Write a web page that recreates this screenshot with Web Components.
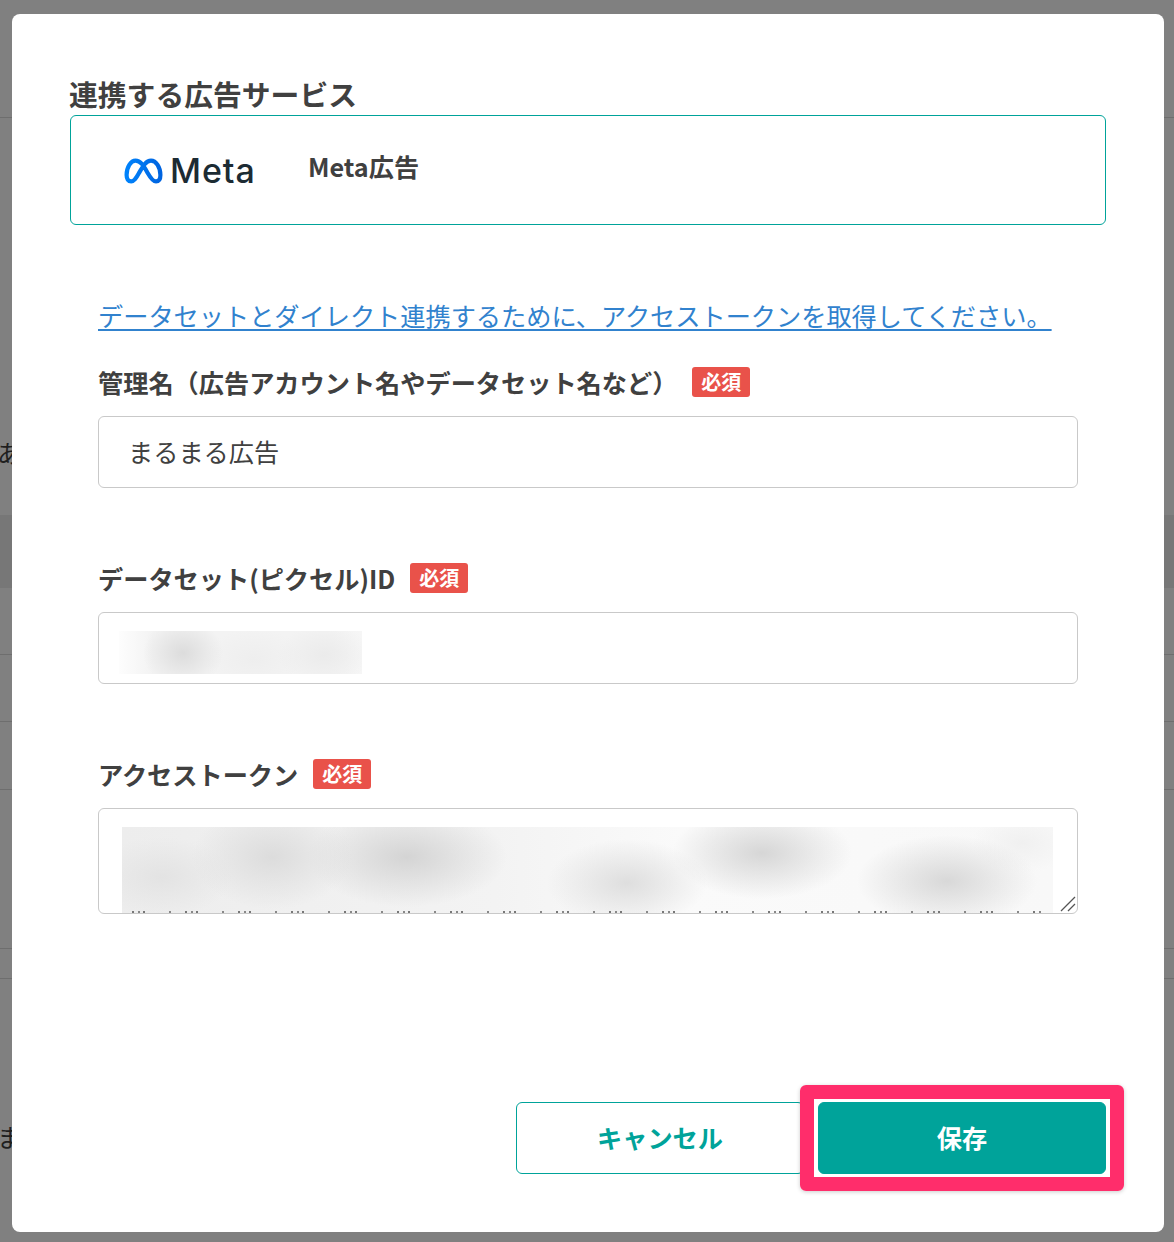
<!DOCTYPE html>
<html lang="ja"><head><meta charset="utf-8"><title>Meta広告</title>
<style>
html,body{margin:0;padding:0;background:#808080}
body{font-family:"Noto Sans CJK JP","Noto Sans",sans-serif;color:#404040;width:1174px;height:1242px;overflow:hidden;position:relative}
</style></head><body>
<x-backdrop>
  <x-row h="118" line></x-row>
  <x-row h="397" pad="318">あ</x-row>
  <x-row h="73" band></x-row>
  <x-row h="67" line></x-row>
  <x-row h="67" line></x-row>
  <x-row h="68" line></x-row>
  <x-row h="159" line></x-row>
  <x-row h="30" line></x-row>
  <x-row h="263" pad="141">ま</x-row>
</x-backdrop>
<x-modal>
  <x-heading>連携する広告サービス</x-heading>
  <x-service-card><x-meta-logo slot="logo"></x-meta-logo>Meta広告</x-service-card>
  <x-form>
    <x-link>データセットとダイレクト連携するために、アクセストークンを取得してください。</x-link>
    <x-field label="管理名（広告アカウント名やデータセット名など）"><x-box>まるまる広告</x-box></x-field>
    <x-field label="データセット(ピクセル)ID"><x-box><x-blur kind="id"></x-blur></x-box></x-field>
    <x-field label="アクセストークン"><x-box kind="area"><x-blur kind="token"></x-blur></x-box></x-field>
  </x-form>
  <x-actions>
    <x-button>キャンセル</x-button>
    <x-button primary>保存</x-button>
  </x-actions>
</x-modal>
<x-callout></x-callout>
<script>
function def(name, css, html, init){
  customElements.define(name, class extends HTMLElement{
    constructor(){super();const r=this.attachShadow({mode:'open'});r.innerHTML='<style>'+css+'</style>'+html;}
    connectedCallback(){if(init)init(this,this.shadowRoot);}
  });
}
def('x-backdrop',':host{display:flex;flex-direction:column;height:1242px;overflow:hidden}','<slot></slot>');
def('x-row',`:host{display:block;box-sizing:border-box;font-size:25px;line-height:32px;color:#1f1f1f;white-space:nowrap;margin-left:-3px}
:host([line]){border-bottom:1px solid #6e6e6e}
:host([band]){background:#777}`,'<slot></slot>',(e)=>{
  e.style.height=e.getAttribute('h')+'px';
  if(e.hasAttribute('pad'))e.style.paddingTop=e.getAttribute('pad')+'px';
});
def('x-modal',`:host{display:flex;flex-direction:column;box-sizing:border-box;position:absolute;left:12px;top:14px;width:1152px;height:1218px;background:#fff;border-radius:8px;padding:60px 58px 0}`,'<slot></slot>');
def('x-heading',':host{display:block;font-size:28.8px;font-weight:700;line-height:39px;margin-bottom:2px;margin-left:-1px;color:#404040;white-space:nowrap}','<slot></slot>');
def('x-service-card',`:host{display:flex;align-items:center;box-sizing:border-box;height:110px;border:1px solid #00a39a;border-radius:6px;padding:0 0 8px 53px;font-size:25.2px;font-weight:700;color:#404040}
.l{display:block;width:184px;flex:none}`,'<span class="l"><slot name="logo"></slot></span><slot></slot>');
def('x-meta-logo',`:host{display:flex;align-items:center;gap:7px;margin-top:10px;color:#1c2b33}
svg{display:block;flex:none}
span{font:500 34px/34px Inter,"Noto Sans",sans-serif;letter-spacing:.9px}`,
`<svg width="39" height="26" viewBox="0 0 39 26" fill="none"><defs><linearGradient id="g" x1="0" y1="0" x2="1" y2="0"><stop offset="0" stop-color="#0082fb"/><stop offset="1" stop-color="#0064e0"/></linearGradient></defs><path stroke="url(#g)" stroke-width="4.2" stroke-linejoin="round" d="M2.6 17C2.6 9 6.8 2.6 11.5 2.6C17 2.6 20 8.6 24 15.5C27 20.8 29 23.4 32 23.4C35 23.4 36.4 21 36.4 17C36.4 9 32 2.6 27 2.6C22 2.6 19 8 15 15C12 20.4 10 23.4 7.2 23.4C4.2 23.4 2.6 21 2.6 17Z"/></svg><span>Meta</span>`);
def('x-form',':host{display:flex;flex-direction:column;padding:71px 28px 0}','<slot></slot>');
def('x-link',`:host{display:block;font-size:25.2px;line-height:38px;color:#3182ce;text-decoration:underline;text-decoration-thickness:2px;text-underline-offset:3px;white-space:nowrap;height:38px;margin-bottom:31px}`,'<slot></slot>');
def('x-field',`:host{display:block;margin-bottom:73px}
:host(:last-child){margin-bottom:0}
.lab{display:flex;align-items:center;font-size:25.2px;font-weight:700;line-height:34px;height:34px;margin-bottom:17px;color:#404040;white-space:nowrap}`,
`<div class="lab"><span class="t"></span><x-badge>必須</x-badge></div><div><slot></slot></div>`,(e,r)=>{
  r.querySelector('.t').textContent=e.getAttribute('label');
  r.querySelector('x-badge').style.marginLeft='15px';
});
def('x-badge',`:host{display:inline-block;width:58px;height:30px;background:#e9524a;color:#fff;border-radius:3px;font-size:20px;font-weight:700;line-height:30px;text-align:center;flex:none}`,'<slot></slot>');
def('x-box',`:host{display:flex;align-items:center;box-sizing:border-box;position:relative;height:72px;border:1px solid #c9c9c9;border-radius:6px;padding:0 0 2px 29px;font-size:25.2px;color:#404040;background:#fff}
:host([kind=area]){height:106px;align-items:flex-start}
svg{display:none;position:absolute;right:1px;bottom:1px}
:host([kind=area]) svg{display:block}`,
`<slot></slot><svg width="16" height="16" viewBox="0 0 16 16"><path d="M1 15L15 1M8 15L15 8" stroke="#555" stroke-width="1.3"/></svg>`);
def('x-blur',`:host{display:block;position:absolute;overflow:hidden}
:host([kind=id]){left:20px;top:18px;width:243px;height:43px;background:
 radial-gradient(ellipse 40px 34px at 64px 22px,#dcdcdc,transparent),
 radial-gradient(ellipse 46px 30px at 205px 24px,#ebebeb,transparent),
 radial-gradient(ellipse 50px 30px at 135px 28px,#eeeeee,transparent),
 linear-gradient(90deg,#fdfdfd,#f3f3f3 14%,#f3f3f3 88%,#f6f6f6)}
:host([kind=token]){left:23px;top:18px;width:931px;height:86px;background:
 radial-gradient(ellipse 80px 52px at 150px 30px,#dcdcdc,transparent),
 radial-gradient(ellipse 100px 50px at 285px 30px,#d4d4d4,transparent),
 radial-gradient(ellipse 70px 40px at 40px 50px,#e3e3e3,transparent),
 radial-gradient(ellipse 80px 44px at 505px 56px,#dedede,transparent),
 radial-gradient(ellipse 90px 46px at 640px 26px,#d6d6d6,transparent),
 radial-gradient(ellipse 90px 46px at 825px 54px,#d8d8d8,transparent),
 radial-gradient(ellipse 50px 30px at 900px 16px,#f0f0f0,transparent),
 linear-gradient(90deg,#ededed,#f3f3f3 40%,#fafafa 60%,#f8f8f8)}
i{position:absolute;left:10px;right:10px;bottom:-1px;height:3px;background:
 repeating-linear-gradient(90deg,#777 0 2px,transparent 2px 6px,#888 6px 8px,transparent 8px 11px,#777 11px 13px,transparent 13px 37px,#888 37px 39px,transparent 39px 53px)}`,
`<i></i>`,(e,r)=>{if(e.getAttribute('kind')!=='token')r.querySelector('i').remove();});
def('x-actions',`:host{display:flex;justify-content:flex-end;gap:14px;margin-top:auto;padding:0 0 58px}`,'<slot></slot>');
def('x-button',`:host{display:flex;align-items:center;justify-content:center;box-sizing:border-box;width:288px;height:72px;border:1px solid #00a39a;border-radius:6px;padding-bottom:3px;background:#fff;color:#00a39a;font-size:25.2px;font-weight:700}
:host([primary]){background:#00a39a;color:#fff}`,'<slot></slot>');
def('x-callout',`:host{display:block;box-sizing:border-box;position:absolute;left:800px;top:1085px;width:324px;height:106px;border:14px solid #ff2d6b;border-radius:6px;box-shadow:0 1px 4px rgba(0,0,0,.2)}`,'');
</script>
</body></html>
